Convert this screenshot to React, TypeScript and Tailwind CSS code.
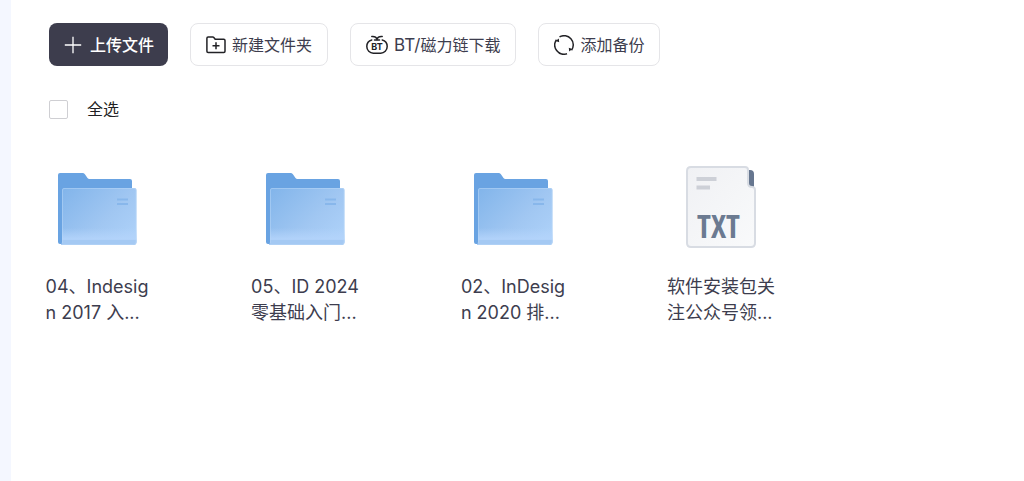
import React, { useState } from 'react';

type Item = { kind: 'folder' | 'txt'; lines: [string, string] };

const items: Item[] = [
  { kind: 'folder', lines: ['04、Indesig', 'n 2017 入...'] },
  { kind: 'folder', lines: ['05、ID 2024', '零基础入门...'] },
  { kind: 'folder', lines: ['02、InDesig', 'n 2020 排...'] },
  { kind: 'txt', lines: ['软件安装包关', '注公众号领...'] },
];

function PlusIcon() {
  return (
    <svg width="18" height="18" viewBox="0 0 18 18" fill="none" stroke="currentColor" strokeWidth="1.3" aria-hidden="true">
      <path d="M9 .8v16.4M.8 9h16.4" />
    </svg>
  );
}

function NewFolderIcon() {
  return (
    <svg width="20" height="20" viewBox="0 0 20 20" fill="none" stroke="#222226" strokeWidth="1.5" strokeLinejoin="round" aria-hidden="true">
      <path d="M.9 3.2q0-1.2 1.2-1.2h4.7q.6 0 1 .5L9.2 4.3h8.6q1.2 0 1.2 1.2v10.7q0 1.2-1.2 1.2H2.1q-1.2 0-1.2-1.2z" />
      <path d="M10 7.3v7M6.5 10.8h7" />
    </svg>
  );
}

function BtIcon() {
  return (
    <svg width="22" height="20" viewBox="0 0 22 20" fill="none" stroke="#222226" strokeWidth="1.5" strokeLinecap="round" aria-hidden="true">
      <path d="M5.8 4.9C3 5.5.8 8.2.8 11.5c0 3.9 3 6.700 6.500 6.700h7.400c3.500 0 6.500-2.800 6.500-6.700 0-3.300-2.200-6-5-6.600" />
      <path d="M5.800 1.500c2.800-.3 4.500.6 5.200 2.500.7-1.900 2.400-2.800 5.200-2.500M8.500 4.900h5" />
      <text x="11" y="14.600" textAnchor="middle" fill="#222226" stroke="none" className="font-['Inter'] text-[9px] font-bold">BT</text>
    </svg>
  );
}

function BackupIcon() {
  return (
    <svg width="20" height="20" viewBox="0 0 20 20" fill="none" stroke="#222226" strokeWidth="1.5" aria-hidden="true">
      <path d="M5.500 1.900A9.200 9.200 0 0 1 17.500 15.300M13 18.700A9.200 9.200 0 0 1 2.500 4.700" />
      <path d="M1.700 6 4.800 3.600 5.200 7.200zM18.300 14l-3.100 2.400-.4-3.600z" fill="#222226" stroke="none" />
    </svg>
  );
}

function FolderArt() {
  return (
    <svg width="80" height="84" viewBox="0 -1 80 84" aria-hidden="true">
      <defs>
        <linearGradient id="front" x1="0" y1="0" x2="1" y2=".75">
          <stop offset="0" stopColor="#81b4ea" />
          <stop offset=".65" stopColor="#a1c7f2" />
          <stop offset="1" stopColor="#acd0f8" />
        </linearGradient>
        <linearGradient id="shine" x1="0" y1="0" x2="0" y2="1">
          <stop offset=".7" stopColor="#b4d4fb" stopOpacity="0" />
          <stop offset=".9" stopColor="#b4d4fb" stopOpacity=".9" />
          <stop offset=".92" stopColor="#a4c9f3" />
          <stop offset="1" stopColor="#a4c9f3" />
        </linearGradient>
      </defs>
      <path d="M1 9q0-2 2-2h22.500q1.500 0 2.400 1.300l2.600 3.700q.7 1 2 1H73q2 0 2 2v20H8v43H3q-2 0-2-2z" fill="#69a3e2" />
      <path d="M5 24q0-2 2-2h70.500q2 0 2 2v52q0 3-3 3H4q1-1 1-3z" fill="url(#front)" />
      <path d="M5 24q0-2 2-2h70.500q2 0 2 2v52q0 3-3 3H4q1-1 1-3z" fill="url(#shine)" />
      <path d="M5.500 77V24q0-1.500 1.500-1.500h70.500q1.500 0 1.500 1.500v52q0 2.500-2.500 2.500H5" fill="none" stroke="#b9d7f8" strokeOpacity=".5" />
      <path d="M60 33.500h11M60 38h11" stroke="#88b7eb" strokeWidth="2" />
    </svg>
  );
}

function TxtArt() {
  return (
    <svg width="70" height="84" viewBox="0 0 70 84" aria-hidden="true">
      <defs>
        <linearGradient id="sheet" x1="0" y1="0" x2="1" y2="1">
          <stop offset="0" stopColor="#f0f1f4" />
          <stop offset="1" stopColor="#f9fafb" />
        </linearGradient>
      </defs>
      <path d="M61 5h3q4 0 4 4v14h-6z" fill="#66768f" />
      <path d="M5 2h54q3 0 3 3v13q0 4 4 4 3 0 3 3v53q0 4-4 4H5q-4 0-4-4V6q0-4 4-4z" fill="url(#sheet)" stroke="#d8dce3" strokeWidth="2" />
      <path d="M10.500 14h20M10.500 22.500h13.500" stroke="#cdd0d7" strokeWidth="4" />
      <text x="32.500" y="72.500" textAnchor="middle" fill="#6b7a91" className="font-['Liberation_Sans_Narrow','Open_Sans_Condensed','Roboto_Condensed','DejaVu_Sans_Condensed',sans-serif] text-[32px] font-bold">TXT</text>
    </svg>
  );
}

const outline =
  "flex h-[43px] items-center gap-[6px] rounded-lg border border-[#e5e5e8] bg-white px-[15px] text-[#3d3d4e] cursor-pointer whitespace-nowrap";

export default function App() {
  const [all, setAll] = useState(false);
  return (
    <div className="flex min-h-screen bg-[#f4f7ff] pl-[11px] font-['Inter','Noto_Sans_CJK_SC',sans-serif] text-base">
      <main className="min-w-0 grow bg-white pt-[23px]">
        <div className="flex flex-wrap gap-[22px] pl-[38px]">
          <button type="button" className="flex h-[43px] cursor-pointer items-center gap-2 whitespace-nowrap rounded-lg bg-[#3d3d4d] pr-[14px] pl-[15px] font-medium text-white">
            <PlusIcon />
            上传文件
          </button>
          <button type="button" className={outline}>
            <NewFolderIcon />
            新建文件夹
          </button>
          <button type="button" className={outline}>
            <BtIcon />
            <span>
              <span className="text-[17px]/6">BT/</span>磁力链下载
            </span>
          </button>
          <button type="button" className={outline}>
            <BackupIcon />
            添加备份
          </button>
        </div>

        <label className="mt-[31px] ml-[38px] flex w-fit items-center gap-[19px] text-[#1f1f24]">
          <input
            type="checkbox"
            checked={all}
            onChange={(e) => setAll(e.target.checked)}
            className="size-[19px] appearance-none rounded-[2px] border border-[#cfcfd3] bg-white checked:bg-[#3d3d4d]"
          />
          全选
        </label>

        <ul className="mt-[44px] grid grid-cols-[repeat(auto-fill,108px)] gap-x-[100px] gap-y-10 pl-8">
          {items.map((item) => (
            <li key={item.lines[0]} className="flex flex-col items-center text-lg/[26px] text-[#3d3d4e]">
              {item.kind === 'folder' ? <FolderArt /> : <TxtArt />}
              <p className="mt-[25px] w-fit whitespace-nowrap">
                <span className="block">{item.lines[0]}</span>
                <span className="block">{item.lines[1]}</span>
              </p>
            </li>
          ))}
        </ul>
      </main>
    </div>
  );
}
